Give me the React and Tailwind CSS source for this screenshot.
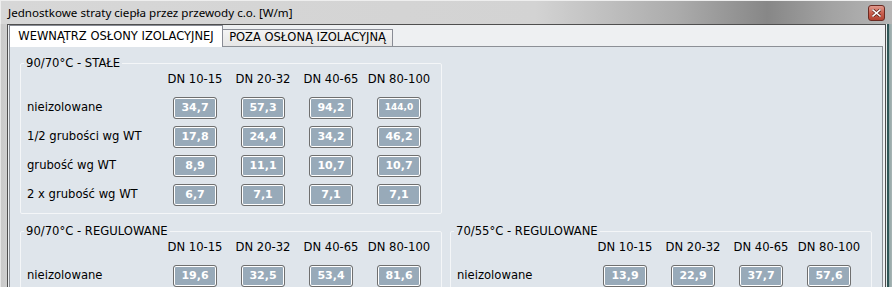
import React from "react";

const COLS = ["DN 10-15", "DN 20-32", "DN 40-65", "DN 80-100"];

const G1 = [
  ["nieizolowane", ["34,7", "57,3", "94,2", "144,0"]],
  ["1/2 grubości wg WT", ["17,8", "24,4", "34,2", "46,2"]],
  ["grubość wg WT", ["8,9", "11,1", "10,7", "10,7"]],
  ["2 x grubość wg WT", ["6,7", "7,1", "7,1", "7,1"]],
];
const G2 = [["nieizolowane", ["19,6", "32,5", "53,4", "81,6"]]];
const G3 = [["nieizolowane", ["13,9", "22,9", "37,7", "57,6"]]];

function Val({ v }) {
  const small = v.length > 4;
  return (
    <div className="w-[44px] h-[22px] rounded-[3px] border border-[#6f6f6f] bg-[#98aab9] shadow-[inset_0_0_0_1px_#ffffff] flex items-center justify-center">
      <span
        className={
          small
            ? "text-[9px] font-bold text-white leading-none"
            : "text-[11px] font-bold text-white leading-none"
        }
      >
        {v}
      </span>
    </div>
  );
}

function Group({ title, rows, extra }) {
  return (
    <fieldset
      className={
        "w-[422px] shrink-0 border border-[#f4f6f8] rounded-[2px] pl-[6px] pb-[4px] " +
        extra
      }
    >
      <legend className="ml-[-3px] px-[2px] leading-[14px]">{title}</legend>
      <div className="grid grid-cols-[134px_68px_68px_68px_68px]">
        <div className="h-[23px]" />
        {COLS.map((c) => (
          <div
            key={c}
            className="h-[23px] pb-[3px] flex items-center justify-center whitespace-nowrap"
          >
            {c}
          </div>
        ))}
        {rows.map(([label, vals]) => (
          <React.Fragment key={label}>
            <div className="h-[29px] flex items-center whitespace-nowrap">
              {label}
            </div>
            {vals.map((v, i) => (
              <div key={i} className="h-[29px] flex items-center justify-center">
                <Val v={v} />
              </div>
            ))}
          </React.Fragment>
        ))}
      </div>
    </fieldset>
  );
}

export default function App() {
  return (
    <div className="w-[892px] h-[287px] overflow-hidden flex flex-col bg-[#d0d0d0] font-['DejaVu_Sans',sans-serif] text-[11.6px] text-black">
      {/* title bar */}
      <div className="h-[24px] shrink-0 flex items-center justify-between pl-[7px] pr-[7px] bg-[linear-gradient(90deg,#d7d7d7_0%,#d3d3d3_60%,#ababab_76%,#878787_86%,#a2a2a2_93%,#b6b6b6_100%)] border-t border-l border-[#eeeeee]">
        <span className="font-['Noto_Sans',sans-serif] text-[11.6px] text-black leading-none">
          Jednostkowe straty ciepła przez przewody c.o. [W/m]
        </span>
        <div className="w-[17px] h-[16px] rounded-[3px] border border-[#6b2a22] bg-[linear-gradient(180deg,#e19a8e_0%,#c9604f_50%,#b24433_100%)] flex items-center justify-center">
          <svg width="9" height="8" viewBox="0 0 9 8">
            <path
              d="M1 1 L8 7 M8 1 L1 7"
              stroke="#5a1e16"
              strokeWidth="3"
              strokeLinecap="square"
            />
            <path
              d="M1 1 L8 7 M8 1 L1 7"
              stroke="#ffffff"
              strokeWidth="1.6"
              strokeLinecap="square"
            />
          </svg>
        </div>
      </div>

      <div className="flex flex-1 min-h-0">
        {/* left frame */}
        <div className="w-[7px] shrink-0 bg-[linear-gradient(90deg,#e6e6e6_0px,#e6e6e6_1px,#c9c9c9_1px,#cfcfcf_100%)]" />
        {/* client */}
        <div className="w-[879px] shrink-0 border-l border-t border-r border-[#4f4f4f] bg-[#eef0f2] pl-[1px] pr-[2px] flex flex-col">
          {/* tabs */}
          <div className="h-[21px] shrink-0 flex items-end">
            <div className="relative z-10 w-[214px] h-[22px] -mb-px bg-white border border-b-0 border-[#898c95] flex items-center justify-center text-[11.5px] whitespace-nowrap">
              WEWNĄTRZ OSŁONY IZOLACYJNEJ
            </div>
            <div className="w-[170px] h-[17px] bg-[linear-gradient(180deg,#f4f4f4_0%,#e6e6e6_100%)] border border-b-0 border-l-0 border-[#898c95] flex items-center justify-center text-[11.5px] whitespace-nowrap">
              POZA OSŁONĄ IZOLACYJNĄ
            </div>
          </div>
          {/* panel */}
          <div className="flex-1 border border-[#8c9096] bg-[#dfe5eb] pt-[9px] pl-[10px] pr-[10px] flex flex-col">
            <Group title="90/70°C - STAŁE" rows={G1} extra="" />
            <div className="flex gap-[8px] mt-[10px]">
              <Group title="90/70°C - REGULOWANE" rows={G2} extra="" />
              <Group title="70/55°C - REGULOWANE" rows={G3} extra="" />
            </div>
          </div>
        </div>
        {/* right frame */}
        <div className="w-[6px] shrink-0 bg-[linear-gradient(90deg,#e9eded_0px,#e9eded_1px,#2f5656_1px,#2f5656_3px,#8fa3a3_3px,#a9b6b6_100%)]" />
      </div>
    </div>
  );
}
